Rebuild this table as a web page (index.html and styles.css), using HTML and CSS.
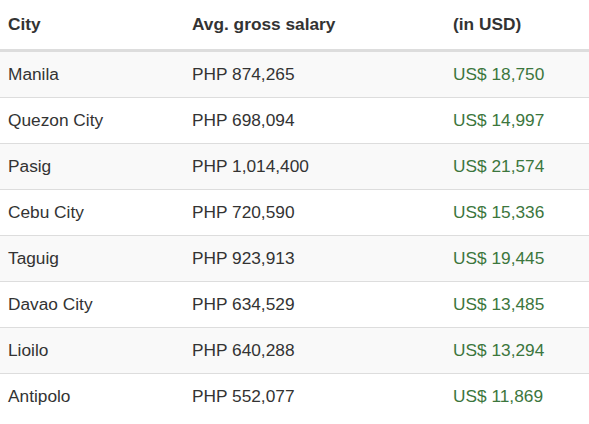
FILE: index.html
```html
<!DOCTYPE html>
<html lang="en">
<head>
<meta charset="utf-8">
<title>Average gross salary by city</title>
<link rel="stylesheet" href="styles.css">
</head>
<body>
<table class="salary-table">
  <colgroup>
    <col class="col-city">
    <col class="col-php">
    <col class="col-usd">
  </colgroup>
  <thead>
    <tr><th>City</th><th>Avg. gross salary</th><th>(in USD)</th></tr>
  </thead>
  <tbody>
    <tr><td>Manila</td><td>PHP 874,265</td><td class="usd">US$ 18,750</td></tr>
    <tr><td>Quezon City</td><td>PHP 698,094</td><td class="usd">US$ 14,997</td></tr>
    <tr><td>Pasig</td><td>PHP 1,014,400</td><td class="usd">US$ 21,574</td></tr>
    <tr><td>Cebu City</td><td>PHP 720,590</td><td class="usd">US$ 15,336</td></tr>
    <tr><td>Taguig</td><td>PHP 923,913</td><td class="usd">US$ 19,445</td></tr>
    <tr><td>Davao City</td><td>PHP 634,529</td><td class="usd">US$ 13,485</td></tr>
    <tr><td>Lioilo</td><td>PHP 640,288</td><td class="usd">US$ 13,294</td></tr>
    <tr><td>Antipolo</td><td>PHP 552,077</td><td class="usd">US$ 11,869</td></tr>
  </tbody>
</table>
</body>
</html>
```
FILE: styles.css
```css
html, body {
  margin: 0;
  padding: 0;
  background: #ffffff;
}

body {
  font-family: "Liberation Sans", Arial, sans-serif;
  font-size: 17.3px;
  line-height: 25px;
  color: #333333;
}

.salary-table {
  width: 589px;
  border-collapse: collapse;
  border-spacing: 0;
  table-layout: fixed;
}

.col-city { width: 184px; }
.col-php { width: 261px; }
.col-usd { width: 144px; }

.salary-table th {
  text-align: left;
  font-weight: bold;
  padding: 12px 8px 12px;
  border-bottom: 3px solid #dddddd;
  white-space: nowrap;
}

.salary-table td {
  padding: 10px 8px 10px;
  border-top: 1px solid #dddddd;
  white-space: nowrap;
}

.salary-table tbody tr:first-child td {
  border-top: 0;
}

.salary-table tbody tr:nth-child(odd) {
  background: #f9f9f9;
}

.salary-table .usd {
  color: #3c763d;
}
```
